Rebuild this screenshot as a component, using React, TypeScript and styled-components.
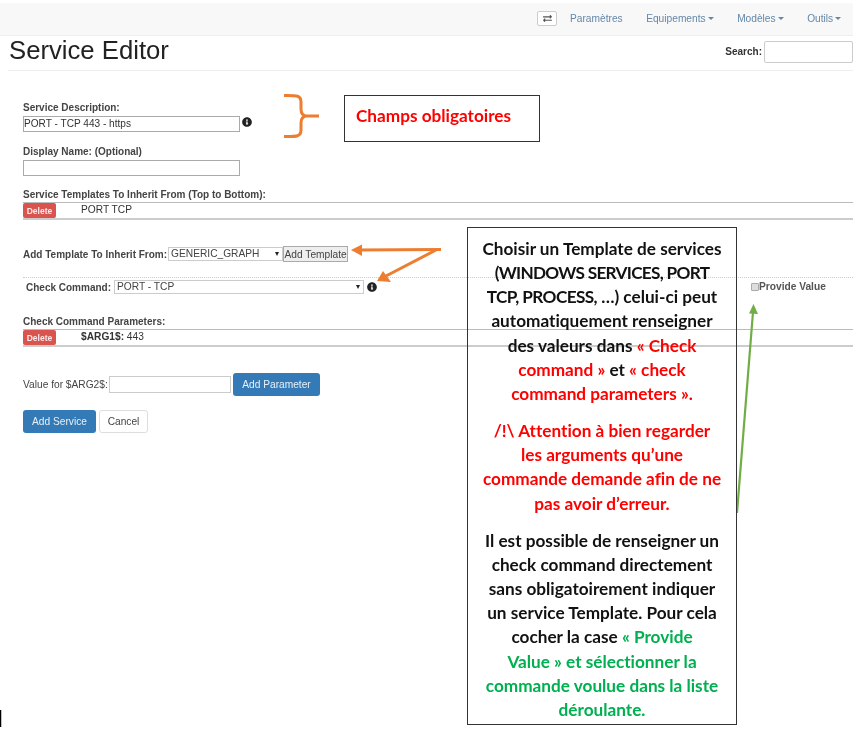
import React from 'react'
import styled, { createGlobalStyle } from 'styled-components'
import { FaExchangeAlt, FaInfoCircle } from 'react-icons/fa'

const GlobalStyle = createGlobalStyle`
  html, body {
    margin: 0;
    padding: 0;
    background: #fff;
  }
  body {
    font-family: "Liberation Sans", Arial, sans-serif;
    color: #333;
  }
`

const App = () => {
  return (
    <Page>
      <GlobalStyle />
      <Main>
        <Navbar>
          <Toggler><FaExchangeAlt size={9} /></Toggler>
          <NavLink>Paramètres</NavLink>
          <NavLink>Equipements<Caret /></NavLink>
          <NavLink>Modèles<Caret /></NavLink>
          <NavLink>Outils<Caret /></NavLink>
        </Navbar>

        <Header>
          <Title>Service Editor</Title>
          <Search>
            <SearchLabel>Search:</SearchLabel>
            <SearchInput />
          </Search>
        </Header>

        <Form>
          <Label>Service Description:</Label>
          <InputRow>
            <TextInput defaultValue="PORT - TCP 443 - https" />
            <Info><FaInfoCircle size={10} /></Info>
          </InputRow>

          <Label $top={13}>Display Name: (Optional)</Label>
          <InputRow>
            <TextInput />
          </InputRow>

          <Label $top={12}>Service Templates To Inherit From (Top to Bottom):</Label>
          <ListRow>
            <DeleteButton>Delete</DeleteButton>
            <ListText>PORT TCP</ListText>
          </ListRow>

          <TemplateRow>
            <InlineLabel>Add Template To Inherit From:</InlineLabel>
            <SelectBox $width={115} $left={1}>
              <NativeSelect>
                <option>GENERIC_GRAPH</option>
              </NativeSelect>
            </SelectBox>
            <GreyButton>Add Template</GreyButton>
          </TemplateRow>

          <Dotted />

          <CommandRow>
            <InlineLabel>Check Command:</InlineLabel>
            <SelectBox $width={250} $left={3}>
              <NativeSelect>
                <option>PORT - TCP</option>
              </NativeSelect>
            </SelectBox>
            <CommandInfo><FaInfoCircle size={10} /></CommandInfo>
          </CommandRow>

          <Label $top={21}>Check Command Parameters:</Label>
          <ListRow>
            <DeleteButton>Delete</DeleteButton>
            <ListText><b>$ARG1$:</b> 443</ListText>
          </ListRow>

          <ValueRow>
            <ValueLabel>Value for $ARG2$:</ValueLabel>
            <ValueInput />
            <BlueButton $width={87}>Add Parameter</BlueButton>
          </ValueRow>

          <ActionRow>
            <BlueButton $width={73}>Add Service</BlueButton>
            <WhiteButton>Cancel</WhiteButton>
          </ActionRow>
        </Form>

        <Provide>
          <FakeCheck />
          Provide Value
        </Provide>
      </Main>

      <Drawing viewBox="0 0 859 733">
        <g fill="none" stroke="#ed7d31" strokeWidth="3">
          <path d="M284 95.500 C296 95.500 301 95 301 102 L301 109 C301 114 303 116 307 116 L319 116 M307 116 C303 116 301 118 301 123 L301 130 C301 137 296 136.500 284 136.500" />
          <path d="M441 249.500 L358 250" />
          <path d="M436 250 L386 276" />
        </g>
        <path d="M351 250 L362 244.500 L362 256 Z" fill="#ed7d31" />
        <path d="M377 281 L383 271 L391 282 Z" fill="#ed7d31" />
        <path d="M737 513 L753 312" stroke="#70ad47" strokeWidth="2.200" fill="none" />
        <path d="M753.500 304 L758 314 L749 313.500 Z" fill="#70ad47" />
        <path d="M0.500 710 L0.500 727" stroke="#000" strokeWidth="1.500" />
      </Drawing>

      <SmallCallout>Champs obligatoires</SmallCallout>

      <BigCallout>
        <Para>
          Choisir un Template de services<br />
          <Caps $spacing={-0.7}>(WINDOWS SERVICES, PORT</Caps><br />
          <Caps $spacing={-0.6}>TCP, PROCESS,</Caps> …) celui-ci peut<br />
          automatiquement renseigner<br />
          des valeurs dans <Red>« Check</Red><br />
          <Red>command »</Red> et <Red>« check</Red><br />
          <Red>command parameters ».</Red>
        </Para>
        <Para>
          <Red>
            /!\ Attention à bien regarder<br />
            les arguments qu’une<br />
            commande demande afin de ne<br />
            pas avoir d’erreur.
          </Red>
        </Para>
        <Para>
          Il est possible de renseigner un<br />
          check command directement<br />
          sans obligatoirement indiquer<br />
          un service Template. Pour cela<br />
          cocher la case <Green>« Provide</Green><br />
          <Green>Value » et sélectionner la</Green><br />
          <Green>commande voulue dans la liste</Green><br />
          <Green>déroulante.</Green>
        </Para>
      </BigCallout>
    </Page>
  )
}

export default App

const Page = styled.div`
  position: relative;
  width: 859px;
  height: 733px;
  overflow: hidden;
  background: #fff;
  filter: blur(0.35px);
`

const Main = styled.div`
  position: relative;
  width: 853px;
  height: 733px;
  padding-top: 3px;
  box-sizing: border-box;
  overflow: hidden;
`

const Navbar = styled.nav`
  height: 33px;
  background: #f8f8f8;
  border-bottom: 1px solid #eee;
  box-sizing: border-box;
  display: flex;
  align-items: center;
  padding: 0 10px 2px 537px;
`

const Toggler = styled.div`
  flex: none;
  width: 20px;
  height: 15px;
  box-sizing: border-box;
  border: 1px solid #ccc;
  border-radius: 2px;
  background: #fff;
  color: #555;
  display: flex;
  align-items: center;
  justify-content: center;
  margin-right: 13px;
`

const NavLink = styled.a`
  flex: none;
  font-size: 10.200px;
  color: #6487a8;
  margin-right: 23.500px;
  display: flex;
  align-items: center;
  &:last-child {
    margin-right: 0;
  }
`

const Caret = styled.span`
  display: inline-block;
  margin-left: 2px;
  border-top: 3.500px solid #6487a8;
  border-left: 3.500px solid transparent;
  border-right: 3.500px solid transparent;
`

const Header = styled.div`
  height: 35px;
  margin-left: 8px;
  border-bottom: 1px solid #eee;
  box-sizing: border-box;
  display: flex;
  justify-content: space-between;
  align-items: flex-start;
`

const Title = styled.h1`
  margin: 0;
  padding: 0 0 0 1px;
  font-size: 25.700px;
  line-height: 29px;
  font-weight: 400;
  color: #222;
`

const Search = styled.div`
  display: flex;
  align-items: center;
  font-size: 10px;
  margin-top: 5px;
  color: #333;
`

const SearchLabel = styled.b`
  margin-bottom: 2px;
`

const SearchInput = styled.input`
  width: 89px;
  height: 22px;
  margin-left: 2px;
  padding: 0;
  box-sizing: border-box;
  border: 1px solid #ccc;
  border-radius: 2px;
`

const Form = styled.div`
  padding: 30px 0 0 23px;
`

const Label = styled.div<{ $top?: number }>`
  margin-top: ${(p) => p.$top ?? 0}px;
  font-size: 10px;
  line-height: 13px;
  font-weight: 700;
  color: #444;
`

const InputRow = styled.div`
  display: flex;
  align-items: center;
  height: 17px;
  margin-top: 1px;
`

const TextInput = styled.input`
  width: 217px;
  height: 16px;
  box-sizing: border-box;
  padding: 0;
  border: 1px solid #aaa;
  font: 10.100px "Liberation Sans", Arial, sans-serif;
  color: #333;
`

const Info = styled.span`
  display: inline-flex;
  margin: 0 0 4px 2px;
  color: #222;
`

const CommandInfo = styled(Info)`
  margin: 0 0 0 3px;
`

const ListRow = styled.div`
  display: flex;
  align-items: center;
  margin-top: 1px;
  border-top: 1px solid #bbb;
  border-bottom: 2px solid #ccc;
  height: 15px;
`

const DeleteButton = styled.div`
  width: 33px;
  height: 15px;
  border-radius: 2px;
  background: #d9534f;
  color: #fbeaea;
  font-size: 8.500px;
  font-weight: 700;
  display: flex;
  align-items: center;
  justify-content: center;
`

const ListText = styled.div`
  margin-left: 25px;
  padding-bottom: 2px;
  font-size: 10.200px;
  color: #333;
`

const TemplateRow = styled.div`
  display: flex;
  align-items: center;
  height: 16px;
  margin-top: 26px;
`

const InlineLabel = styled.span`
  font-size: 10px;
  font-weight: 700;
  color: #444;
  white-space: nowrap;
`

const SelectBox = styled.div<{ $width: number; $left: number }>`
  position: relative;
  flex: none;
  width: ${(p) => p.$width}px;
  height: 14px;
  margin-left: ${(p) => p.$left}px;
  &::after {
    content: '';
    position: absolute;
    right: 4px;
    top: 5px;
    border-top: 4px solid #222;
    border-left: 2.500px solid transparent;
    border-right: 2.500px solid transparent;
  }
`

const NativeSelect = styled.select`
  appearance: none;
  display: block;
  width: 100%;
  height: 100%;
  padding: 0 0 0 2px;
  box-sizing: border-box;
  border: 1px solid #ccc;
  border-radius: 0;
  background: #fff;
  font: 10.200px/12px "Liberation Sans", Arial, sans-serif;
  color: #444;
`

const GreyButton = styled.div`
  flex: none;
  width: 65px;
  height: 16px;
  box-sizing: border-box;
  border: 1px solid #aaa;
  background: #eee;
  font-size: 10.200px;
  color: #444;
  display: flex;
  align-items: center;
  justify-content: center;
  white-space: nowrap;
`

const Dotted = styled.div`
  margin-top: 15px;
  border-top: 1px dotted #ccc;
`

const CommandRow = styled.div`
  display: flex;
  align-items: center;
  height: 14px;
  margin: 2px 0 0 3px;
`

const ValueRow = styled.div`
  display: flex;
  align-items: center;
  height: 24px;
  margin-top: 25px;
`

const ValueLabel = styled.span`
  font-size: 10.200px;
  color: #444;
  width: 86px;
  white-space: nowrap;
`

const ValueInput = styled.input`
  width: 122px;
  height: 17px;
  box-sizing: border-box;
  padding: 0;
  border: 1px solid #ccc;
  margin-right: 2px;
`

const BlueButton = styled.div<{ $width: number }>`
  width: ${(p) => p.$width}px;
  height: 23px;
  border-radius: 3px;
  background: #337ab7;
  color: #e8f0f8;
  font-size: 10.200px;
  display: flex;
  align-items: center;
  justify-content: center;
`

const WhiteButton = styled.div`
  width: 49px;
  height: 23px;
  box-sizing: border-box;
  border: 1px solid #ddd;
  border-radius: 3px;
  color: #444;
  font-size: 10.200px;
  display: flex;
  align-items: center;
  justify-content: center;
`

const ActionRow = styled.div`
  display: flex;
  gap: 3px;
  margin-top: 14px;
`

const Provide = styled.div`
  position: absolute;
  left: 751px;
  top: 281px;
  display: flex;
  align-items: center;
  font-size: 10.200px;
  font-weight: 700;
  color: #555;
`

const FakeCheck = styled.span`
  width: 8px;
  height: 8px;
  box-sizing: border-box;
  border: 1px solid #aaa;
  background: #ddd;
  border-radius: 1px;
`

const Drawing = styled.svg`
  position: absolute;
  left: 0;
  top: 0;
  width: 859px;
  height: 733px;
  pointer-events: none;
`

const SmallCallout = styled.div`
  position: absolute;
  left: 344px;
  top: 95px;
  width: 196px;
  height: 47px;
  box-sizing: border-box;
  padding: 8px 0 0 11px;
  border: 1.500px solid #333;
  color: #f00;
  font: 700 17.200px/24px Lato, "Open Sans", sans-serif;
`

const BigCallout = styled.div`
  position: absolute;
  left: 467px;
  top: 227px;
  width: 270px;
  height: 498px;
  box-sizing: border-box;
  padding-top: 9px;
  border: 1.500px solid #333;
  color: #111;
  text-align: center;
  font: 700 17.200px/24.150px Lato, "Open Sans", sans-serif;
  font-variant-ligatures: none;
  white-space: nowrap;
`

const Para = styled.p`
  margin: 0 0 13px;
`

const Caps = styled.span<{ $spacing: number }>`
  letter-spacing: ${(p) => p.$spacing}px;
`

const Red = styled.span`
  color: #f00;
`

const Green = styled.span`
  color: #00b050;
`
